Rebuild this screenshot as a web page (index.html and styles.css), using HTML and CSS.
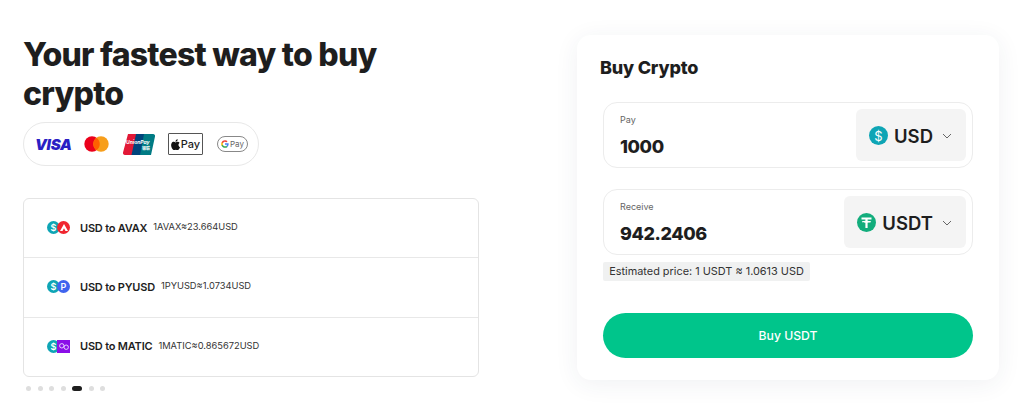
FILE: index.html
```html
<!DOCTYPE html>
<html lang="en">
<head>
<meta charset="utf-8">
<title>Buy Crypto</title>
<link rel="stylesheet" href="styles.css">
</head>
<body>
<main class="page">
  <section class="left">
    <h1 class="headline">Your fastest way to buy crypto</h1>
    <div class="pay-chip">
      <span class="visa">VISA</span>
      <svg class="mc" width="25" height="16" viewBox="0 0 25 16"><circle cx="8" cy="8" r="7.7" fill="#eb001b"/><circle cx="17" cy="8" r="7.7" fill="#f79e1b"/><path d="M12.5 1.700a7.700 7.700 0 0 1 0 12.600a7.700 7.700 0 0 1 0-12.600z" fill="#ff5f00"/></svg>
      <svg class="up" width="32" height="21" viewBox="0 0 32 21"><path d="M5 0h10l-4 21H2a2 2 0 0 1-2-2.500z" fill="#e21836"/><path d="M13 0h10l-4 21H8.500z" fill="#00447c"/><path d="M21 0h9a2 2 0 0 1 2 2.500L28 21h-11z" fill="#007b84"/><text x="3" y="10" class="up-text">UnionPay</text><text x="19" y="16" class="up-text-b">银联</text></svg>
      <span class="apay"><svg width="9" height="11" viewBox="0 0 14 17"><path d="M11.600 9c0-2 1.700-3 1.800-3-1-1.400-2.500-1.600-3-1.600-1.300-.1-2.500.8-3.200.8s-1.700-.8-2.800-.8C2.900 4.400 1.600 5.200.9 6.500c-1.500 2.600-.4 6.500 1.100 8.600.7 1 1.600 2.200 2.700 2.100 1.100 0 1.500-.7 2.800-.7s1.700.7 2.800.7c1.200 0 1.900-1 2.600-2.100.8-1.200 1.200-2.300 1.200-2.400-.1 0-2.500-.9-2.500-3.700zM9.500 3c.6-.7 1-1.700.9-2.700-.9 0-1.900.6-2.500 1.300-.5.600-1 1.600-.9 2.600 1 .1 1.900-.5 2.500-1.200z" fill="#111"/></svg>Pay</span>
      <span class="gpay"><svg width="8" height="8" viewBox="0 0 24 24"><path d="M23 12.300c0-.8-.1-1.600-.2-2.300H12v4.400h6.200c-.3 1.400-1.100 2.600-2.300 3.400v2.800h3.700c2.100-2 3.400-4.900 3.400-8.300z" fill="#4285f4"/><path d="M12 23.500c3.100 0 5.700-1 7.600-2.800l-3.700-2.900c-1 .7-2.400 1.100-3.900 1.100-3 0-5.500-2-6.400-4.700H1.800v2.900c1.900 3.800 5.800 6.400 10.200 6.400z" fill="#34a853"/><path d="M5.600 14.200c-.5-1.400-.5-3 0-4.400V6.900H1.800a11.500 11.500 0 0 0 0 10.200z" fill="#fbbc04"/><path d="M12 5.100c1.700 0 3.200.6 4.400 1.700l3.300-3.300C17.700 1.600 15.100.5 12 .5 7.500.5 3.700 3.100 1.800 6.900l3.800 2.900C6.500 7.100 9 5.100 12 5.100z" fill="#ea4335"/></svg>Pay</span>
    </div>
    <div class="rates">
      <div class="rate">
        <span class="pair">
          <span class="coin coin-usd">$</span>
          <span class="coin coin-second coin-avax"><svg width="8" height="7" viewBox="0 0 8 7"><path d="M4 0 8 7H5.500L4 4.300 2.500 7H0z" fill="#fff"/></svg></span>
        </span>
        <span class="rate-name">USD to AVAX</span>
        <span class="rate-value">1AVAX≈23.664USD</span>
      </div>
      <div class="rate">
        <span class="pair">
          <span class="coin coin-usd">$</span>
          <span class="coin coin-second coin-pyusd">P</span>
        </span>
        <span class="rate-name">USD to PYUSD</span>
        <span class="rate-value">1PYUSD≈1.0734USD</span>
      </div>
      <div class="rate">
        <span class="pair">
          <span class="coin coin-usd">$</span>
          <span class="coin coin-second coin-matic"><svg width="10" height="7" viewBox="0 0 10 7"><g fill="none" stroke="#e6d3ff" stroke-width="1"><circle cx="2.800" cy="2.800" r="2.200"/><circle cx="7.200" cy="4.200" r="2.200"/></g></svg></span>
        </span>
        <span class="rate-name">USD to MATIC</span>
        <span class="rate-value">1MATIC≈0.865672USD</span>
      </div>
    </div>
    <div class="dots">
      <span class="dot"></span><span class="dot"></span><span class="dot"></span><span class="dot"></span><span class="dot dot-active"></span><span class="dot"></span><span class="dot"></span>
    </div>
  </section>
  <section class="card">
    <h2 class="card-title">Buy Crypto</h2>
    <div class="field">
      <div class="field-main">
        <span class="field-label">Pay</span>
        <span class="field-value">1000</span>
      </div>
      <div class="select">
        <span class="select-coin select-usd">$</span>
        <span class="select-name">USD</span>
        <svg class="chev" width="10" height="6" viewBox="0 0 10 6"><path d="M1 1l4 4 4-4" fill="none" stroke="#666" stroke-width="1"/></svg>
      </div>
    </div>
    <div class="field field-receive">
      <div class="field-main">
        <span class="field-label">Receive</span>
        <span class="field-value">942.2406</span>
      </div>
      <div class="select">
        <span class="select-coin select-usdt"><svg width="13" height="13" viewBox="0 0 13 13"><path d="M1.500 1.500h10v2H7.600v1.300c2 .1 3.600.5 3.600 1s-1.600.9-3.600 1V12H5.400V6.800c-2-.1-3.600-.5-3.600-1s1.600-.9 3.600-1V3.500H1.500z" fill="#fff"/></svg></span>
        <span class="select-name">USDT</span>
        <svg class="chev" width="10" height="6" viewBox="0 0 10 6"><path d="M1 1l4 4 4-4" fill="none" stroke="#666" stroke-width="1"/></svg>
      </div>
    </div>
    <div class="estimate">Estimated price: 1 USDT ≈ 1.0613 USD</div>
    <button class="buy" type="button">Buy USDT</button>
  </section>
</main>
</body>
</html>
```

FILE: styles.css
```css
* { box-sizing: border-box; }
html, body { margin: 0; height: 100%; }
body {
  background: #fff;
  color: #1e1e1e;
  font-family: Inter, "Liberation Sans", sans-serif;
  overflow: hidden;
}
.page {
  display: flex;
  align-items: flex-start;
  padding: 35px 25px 0 23px;
  justify-content: space-between;
}
.left { width: 456px; }
.headline {
  margin: 0;
  width: 380px;
  font-size: 32px;
  line-height: 39px;
  font-weight: 800;
  letter-spacing: -0.75px;
}
.pay-chip {
  margin-top: 9px;
  width: 236px;
  height: 44px;
  border: 1px solid #e8e8e8;
  border-radius: 22px;
  display: flex;
  align-items: center;
  padding-left: 11px;
}
.visa {
  color: #2a1fc4;
  font: italic 900 15px/1 Inter, sans-serif;
  letter-spacing: -0.300px;
  width: 35px;
}
.mc { margin-left: 14px; }
.up { margin-left: 14px; }
.up-text { font: italic 700 5px Inter, sans-serif; fill: #fff; }
.up-text-b { font: 700 4px "Noto Sans CJK SC", sans-serif; fill: #fff; }
.apay {
  margin-left: 13px;
  width: 35px;
  height: 22px;
  border: 1px solid #555;
  border-radius: 1px;
  display: flex;
  align-items: center;
  justify-content: center;
  gap: 1px;
  font-size: 11px;
  font-weight: 500;
}
.gpay {
  margin-left: 14px;
  width: 31px;
  height: 16px;
  border: 1px solid #888;
  border-radius: 8px;
  display: flex;
  align-items: center;
  justify-content: center;
  gap: 1px;
  font-size: 8px;
  color: #666;
}
.rates {
  margin-top: 32px;
  height: 179px;
  border: 1px solid #e4e4e4;
  border-radius: 6px;
  display: flex;
  flex-direction: column;
}
.rate {
  flex: 1;
  display: flex;
  align-items: center;
  padding-left: 23px;
  padding-bottom: 1px;
  border-bottom: 1px solid #e8e8e8;
}
.rate:last-child { border-bottom: 0; }
.pair { display: flex; width: 23px; }
.coin {
  width: 13px;
  height: 13px;
  border-radius: 50%;
  display: flex;
  align-items: center;
  justify-content: center;
  color: #fff;
  font-size: 9px;
  font-weight: 600;
}
.coin-usd { background: #0ea5b5; }
.coin-second { margin-left: -3px; }
.coin-avax { background: #f0252f; }
.coin-pyusd { background: #3f64ee; }
.coin-matic { background: #8b0fe8; border-radius: 0; }
.rate-name {
  margin-left: 10px;
  font-size: 11px;
  font-weight: 600;
  letter-spacing: -0.200px;
}
.rate-value {
  margin-left: 6px;
  margin-top: -2px;
  font-size: 9.300px;
  color: #333;
}
.dots {
  margin-top: 9px;
  padding-left: 3px;
  display: flex;
  align-items: center;
  gap: 6.500px;
}
.dot {
  width: 5px;
  height: 5px;
  border-radius: 50%;
  background: #dedede;
}
.dot-active {
  width: 10px;
  border-radius: 3px;
  background: #1e1e1e;
}
.card {
  width: 422px;
  height: 345px;
  margin-left: auto;
  padding: 22px 26px 0;
  background: #fff;
  border-radius: 14px;
  box-shadow: 0 4px 24px rgba(40, 60, 80, 0.07);
}
.card-title {
  margin: 0 0 0 -3px;
  font-size: 18px;
  line-height: 22px;
  font-weight: 800;
  letter-spacing: -0.200px;
}
.field {
  margin-top: 23px;
  height: 66px;
  border: 1px solid #ececec;
  border-radius: 14px;
  display: flex;
  align-items: center;
  justify-content: space-between;
  padding: 0 6px 0 16px;
}
.field-receive { margin-top: 21px; }
.field-main { display: flex; flex-direction: column; padding-top: 2px; }
.field-label { font-size: 9px; line-height: 11px; color: #666; }
.field-value {
  margin-top: 11px;
  font-size: 18px;
  line-height: 22px;
  font-weight: 800;
  letter-spacing: -0.400px;
}
.select {
  height: 52px;
  padding: 1px 14px 0 13px;
  background: #f4f4f4;
  border-radius: 6px;
  display: flex;
  align-items: center;
}
.select-coin {
  width: 19px;
  height: 19px;
  border-radius: 50%;
  color: #fff;
  display: flex;
  align-items: center;
  justify-content: center;
  font-size: 13px;
}
.select-usd { background: #0ea5b5; }
.select-usdt { background: #12ad7c; }
.select-name {
  margin-left: 6px;
  font-size: 18.500px;
  font-weight: 600;
}
.chev { margin-left: 9px; }
.estimate {
  margin-top: 7px;
  width: 207px;
  height: 19px;
  background: #f0f1f1;
  border-radius: 2px;
  font-size: 10.900px;
  line-height: 19px;
  text-align: center;
  color: #333;
}
.buy {
  display: block;
  width: 100%;
  height: 45px;
  margin-top: 32px;
  border: 0;
  border-radius: 23px;
  background: #00c58b;
  color: #fff;
  font: 500 12.200px Inter, sans-serif;
}
```
